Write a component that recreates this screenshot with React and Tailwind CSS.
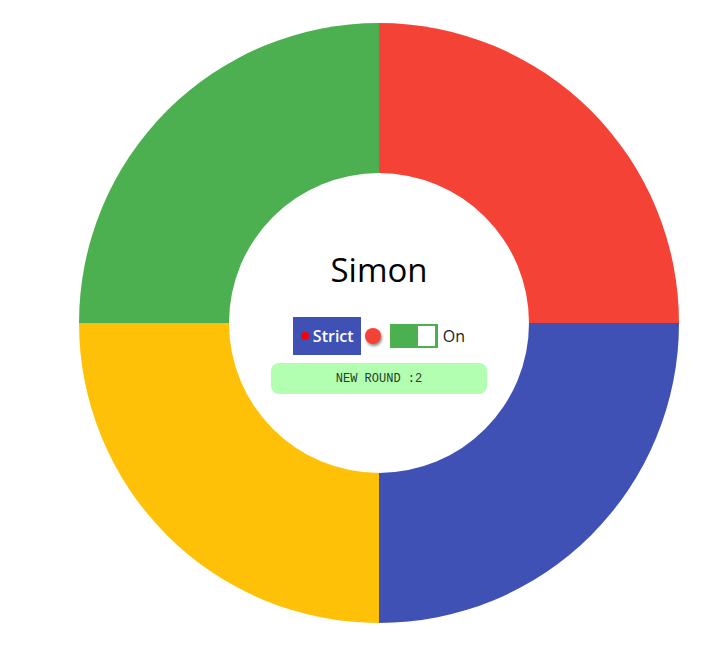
export default function App() {
  return (
    <div className="w-[726px] h-[653px] bg-white overflow-hidden" style={{ fontFamily: '"Open Sans", sans-serif' }}>
      <div className="ml-[79px] mt-[23px] relative w-[600px] h-[600px]">
        <div className="w-[600px] h-[600px] rounded-full overflow-hidden grid grid-cols-2 grid-rows-2">
          <div className="bg-[#4CAF50]" />
          <div className="bg-[#F44336]" />
          <div className="bg-[#FFC107]" />
          <div className="bg-[#3F51B5]" />
        </div>
        <div className="absolute left-[150px] top-[150px] w-[300px] h-[300px] rounded-full bg-white flex flex-col items-center pt-[80px]">
          <div className="text-[33px] leading-none text-black font-medium">Simon</div>
          <div className="mt-[31px] flex items-center h-[38px]">
            <div className="w-[68px] h-[38px] bg-[#3F51B5] flex items-center pl-[8px]">
              <span className="w-[8px] h-[8px] rounded-full bg-[#FF0000]" />
              <span className="ml-[4px] text-white font-semibold text-[16px] leading-none">Strict</span>
            </div>
            <div className="ml-[4px] w-[16px] h-[16px] rounded-full bg-[#F44336] shadow-[1px_2px_3px_rgba(0,0,0,0.45)]" />
            <div className="ml-[9px] w-[48px] h-[24px] bg-[#4CAF50] flex items-center justify-end pr-[3px]">
              <div className="w-[17px] h-[20px] bg-white" />
            </div>
            <span className="ml-[5px] text-[16px] leading-none text-[#222]">On</span>
          </div>
          <div className="mt-[8px] w-[216px] h-[31px] rounded-[8px] bg-[#B2FFB2] flex items-center justify-center text-[12px] text-[#244224]" style={{ fontFamily: '"Liberation Mono", monospace' }}>
            NEW ROUND :2
          </div>
        </div>
      </div>
    </div>
  );
}
